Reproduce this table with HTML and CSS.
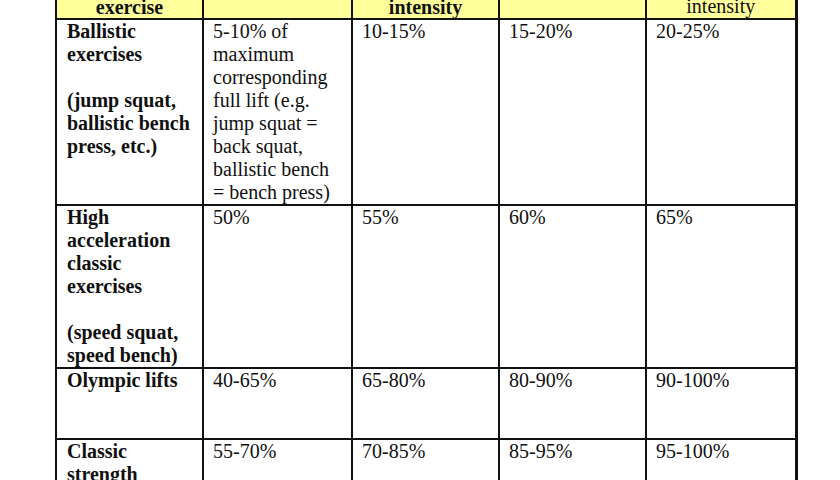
FILE: index.html
```html
<!DOCTYPE html>
<html>
<head>
<meta charset="utf-8">
<link rel="stylesheet" href="styles.css">
</head>
<body>
<div class="page">
<table class="grid">
<colgroup>
<col class="c1"><col class="c2"><col class="c3"><col class="c4"><col class="c5">
</colgroup>
<thead>
<tr>
<th class="hd bold">exercise</th>
<th class="hd"></th>
<th class="hd bold">intensity</th>
<th class="hd"></th>
<th class="hd plain raised">intensity</th>
</tr>
</thead>
<tbody>
<tr>
<td class="name">Ballistic<br>exercises<br>&nbsp;<br>(jump squat,<br>ballistic bench<br>press, etc.)</td>
<td>5-10% of<br>maximum<br>corresponding<br>full lift (e.g.<br>jump squat =<br>back squat,<br>ballistic bench<br>= bench press)</td>
<td>10-15%</td>
<td>15-20%</td>
<td>20-25%</td>
</tr>
<tr>
<td class="name">High<br>acceleration<br>classic<br>exercises<br>&nbsp;<br>(speed squat,<br>speed bench)</td>
<td>50%</td>
<td>55%</td>
<td>60%</td>
<td>65%</td>
</tr>
<tr class="short">
<td class="name">Olympic lifts</td>
<td>40-65%</td>
<td>65-80%</td>
<td>80-90%</td>
<td>90-100%</td>
</tr>
<tr>
<td class="name">Classic<br>strength<br>exercises</td>
<td>55-70%</td>
<td>70-85%</td>
<td>85-95%</td>
<td>95-100%</td>
</tr>
</tbody>
</table>
</div>
</body>
</html>
```

FILE: styles.css
```css
html, body {
  margin: 0;
  padding: 0;
  background: #ffffff;
  overflow: hidden;
}

.page {
  padding-left: 55px;
  height: 480px;
  overflow: hidden;
}

.grid {
  margin-top: -8px;
  border-collapse: collapse;
  table-layout: fixed;
  width: 740px;
  font-family: "Liberation Serif", "Times New Roman", serif;
  font-size: 20px;
  line-height: 23px;
  color: #101010;
  border: 2px solid #111;
  border-right-width: 3px;
}

.c1 { width: 147px; }
.c2 { width: 149px; }
.c3 { width: 147px; }
.c4 { width: 147px; }
.c5 { width: 150px; }

.grid th,
.grid td {
  border: 2px solid #111;
  padding: 0 9px;
  vertical-align: top;
  text-align: left;
}

.grid .hd {
  background: #ffff9c;
  vertical-align: bottom;
  text-align: center;
  height: 23px;
  line-height: 21px;
  font-weight: normal;
}

.grid .bold { font-weight: bold; }
.grid .plain { font-weight: normal; }
.grid .raised { padding-bottom: 1px; }

.grid td.name {
  font-weight: bold;
  padding-left: 10px;
}

.short td { height: 69px; }
```
